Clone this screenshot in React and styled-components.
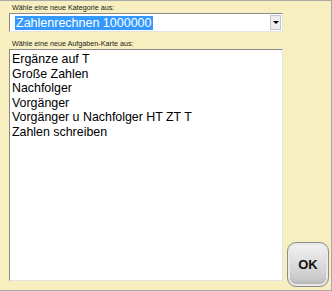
import React from 'react';
import styled, { createGlobalStyle } from 'styled-components';

const Global = createGlobalStyle`
  html, body {
    margin: 0;
    padding: 0;
    background: #f8efc1;
  }
`;

const Panel = styled.div`
  box-sizing: border-box;
  width: 332px;
  height: 291px;
  background: #f8efc1;
  border-top: 1px solid #a9a9a9;
  border-right: 1px solid #a9a9a9;
  border-bottom: 1px solid #a9a9a9;
  padding: 2px 0 0 9px;
  display: grid;
  grid-template-columns: 274px 1fr;
  grid-template-rows: auto auto auto 1fr;
  font-family: 'Liberation Sans', Arial, sans-serif;
`;

const Label = styled.div`
  grid-column: 1;
  font-size: 7.2px;
  line-height: 10px;
  color: #202020;
  padding-left: 3px;
  height: 10px;
  margin-top: ${p => p.$top || 0}px;
`;

const Select = styled.div`
  grid-column: 1;
  box-sizing: border-box;
  height: 19px;
  background: #fff;
  border-top: 1px solid #8a8a8a;
  border-left: 1px solid #8a8a8a;
  border-right: 1px solid #e4e4e4;
  border-bottom: 1px solid #e4e4e4;
  display: flex;
  align-items: center;
  padding: 0 1px 0 5px;
`;

const Selected = styled.span`
  background: #3399ff;
  color: #fff;
  font-size: 12.5px;
  line-height: 14px;
  height: 14px;
  padding: 0 1px;
`;

const Spacer = styled.div`
  flex: 1;
`;

const DropButton = styled.div`
  width: 11px;
  height: 15px;
  box-sizing: border-box;
  background: #ececec;
  border: 1px solid #c6c6c6;
  display: flex;
  align-items: center;
  justify-content: center;
`;

const Arrow = styled.span`
  width: 0;
  height: 0;
  border-left: 3px solid transparent;
  border-right: 3px solid transparent;
  border-top: 3px solid #000;
`;

const List = styled.div`
  grid-column: 1;
  box-sizing: border-box;
  height: 232px;
  background: #fff;
  border-top: 1px solid #8a8a8a;
  border-left: 1px solid #8a8a8a;
  border-right: 1px solid #e4e4e4;
  border-bottom: 1px solid #e4e4e4;
  padding: 2px 0 0 2px;
`;

const Item = styled.div`
  font-size: 12.4px;
  line-height: 14.5px;
  color: #000;
  white-space: nowrap;
`;

const Side = styled.div`
  grid-column: 2;
  grid-row: 1 / 5;
  display: flex;
  align-items: flex-end;
  padding: 0 0 3px 4px;
`;

const OkButton = styled.button`
  width: 42px;
  height: 45px;
  border-radius: 9px;
  border: 1px solid #8d8d8d;
  background: linear-gradient(#f4f4f4, #d8d8d8 55%, #c2c2c2);
  box-shadow: inset 0 0 0 2px #e8e8e8, inset 0 -3px 4px rgba(0, 0, 0, 0.12);
  font-family: 'Liberation Sans', Arial, sans-serif;
  font-weight: bold;
  font-size: 13px;
  color: #111;
  padding: 0;
`;

const items = [
  'Ergänze auf T',
  'Große Zahlen',
  'Nachfolger',
  'Vorgänger',
  'Vorgänger u Nachfolger HT ZT T',
  'Zahlen schreiben',
];

export default function App() {
  return (
    <>
      <Global />
      <Panel>
        <Label>Wähle eine neue Kategorie aus:</Label>
        <Select>
          <Selected>Zahlenrechnen 1000000</Selected>
          <Spacer />
          <DropButton>
            <Arrow />
          </DropButton>
        </Select>
        <Label $top={7}>Wähle eine neue Aufgaben-Karte aus:</Label>
        <List>
          {items.map(t => (
            <Item key={t}>{t}</Item>
          ))}
        </List>
        <Side>
          <OkButton>OK</OkButton>
        </Side>
      </Panel>
    </>
  );
}
